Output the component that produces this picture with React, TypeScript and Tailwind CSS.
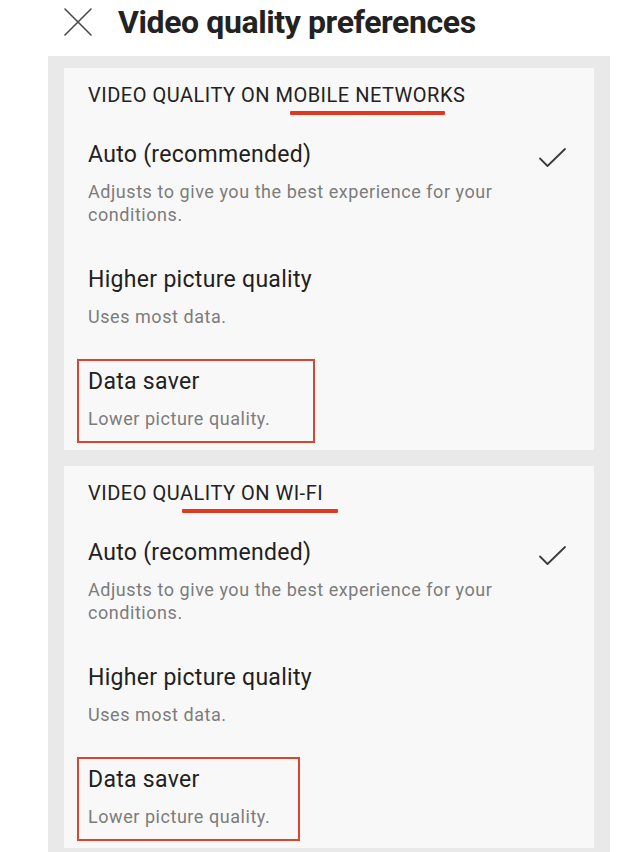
import React from "react";

function Check() {
  return (
    <svg width="30" height="22" viewBox="0 0 30 22" fill="none">
      <path d="M2 11.5 L9.5 19 L27 2" stroke="#3a3a3a" strokeWidth="1.8" strokeLinecap="round" strokeLinejoin="round" />
    </svg>
  );
}

function Close() {
  return (
    <svg width="30" height="28" viewBox="0 0 30 28" fill="none">
      <path d="M2 1 L28 27 M28 1 L2 27" stroke="#4a4a4a" strokeWidth="1.6" strokeLinecap="round" />
    </svg>
  );
}

function Option({ title, desc, checked }: { title: string; desc: string; checked?: boolean }) {
  return (
    <div className="flex items-start">
      <div className="flex-1">
        <div className="text-[23px] leading-[28px] tracking-[0.3px] text-[#212121]">{title}</div>
        <div className="mt-[11px] text-[18px] leading-[23px] tracking-[0.55px] text-[#7c7c7c] w-[440px]">{desc}</div>
      </div>
      {checked && (
        <div className="mt-[6px] mr-[26px]">
          <Check />
        </div>
      )}
    </div>
  );
}

function Section({
  heading,
  lineLeft,
  lineWidth,
  boxWidth,
}: {
  heading: string;
  lineLeft: string;
  lineWidth: string;
  boxWidth: string;
}) {
  return (
    <div className="bg-[#f8f8f8] pt-[15px] pb-[7px] pl-[24px]">
      <div className="text-[20px] leading-[24px] tracking-[0.5px] text-[#222]">{heading}</div>
      <div className={`mt-[4px] h-[4px] bg-[#e0391f] rounded-[1px] ${lineLeft} ${lineWidth}`} />
      <div className="mt-[26px]">
        <Option
          title="Auto (recommended)"
          desc="Adjusts to give you the best experience for your conditions."
          checked
        />
      </div>
      <div className="mt-[40px]">
        <Option title="Higher picture quality" desc="Uses most data." />
      </div>
      <div className={`mt-[31px] -ml-[11px] border-2 border-[#d9462f] pl-[9px] pt-[7px] pb-[11px] ${boxWidth}`}>
        <div className="text-[23px] leading-[28px] tracking-[0.3px] text-[#212121]">Data saver</div>
        <div className="mt-[11px] text-[18px] leading-[23px] tracking-[0.55px] text-[#7c7c7c] whitespace-nowrap">
          Lower picture quality.
        </div>
      </div>
    </div>
  );
}

export default function App() {
  return (
    <div className="w-[640px] h-[852px] overflow-hidden bg-white" style={{ fontFamily: "Roboto, 'Liberation Sans', sans-serif" }}>
      <div className="h-[56px] flex items-center pl-[63px] pb-[12px]">
        <Close />
        <div className="ml-[25px] text-[32px] font-bold text-[#222] tracking-[-0.4px] leading-[36px]">
          Video quality preferences
        </div>
      </div>
      <div className="ml-[48px] w-[562px] bg-[#e9e9e9] pt-[12px] px-[16px] pr-[16px] flex flex-col gap-[16px] h-[796px]">
        <Section heading="VIDEO QUALITY ON MOBILE NETWORKS" lineLeft="ml-[202px]" lineWidth="w-[155px]" boxWidth="w-[238px]" />
        <Section heading="VIDEO QUALITY ON WI-FI" lineLeft="ml-[94px]" lineWidth="w-[156px]" boxWidth="w-[223px]" />
      </div>
    </div>
  );
}
